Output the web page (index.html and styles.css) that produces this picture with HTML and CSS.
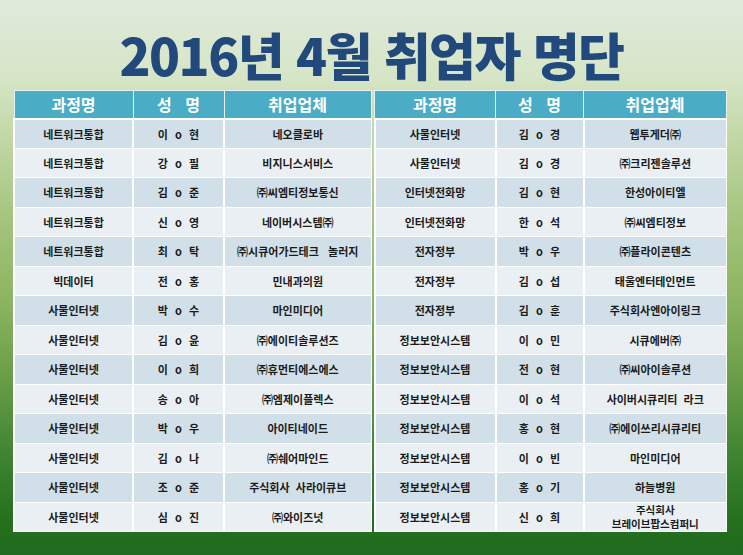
FILE: index.html
```html
<!DOCTYPE html>
<html lang="ko">
<head>
<meta charset="utf-8">
<link rel="stylesheet" href="styles.css">
</head>
<body>
<div class="page">
  <h1 class="title">2016년 4월 취업자 명단</h1>
  <div class="tables">
    <table class="list list-left">
      <colgroup><col class="c1"><col class="c2"><col class="c3"></colgroup>
      <thead><tr><th>과정명</th><th>성&nbsp;&nbsp;&nbsp;명</th><th>취업업체</th></tr></thead>
      <tbody>
        <tr><td>네트워크통합</td><td class="nm">이 o 현</td><td>네오클로바</td></tr>
        <tr><td>네트워크통합</td><td class="nm">강 o 필</td><td>비지니스서비스</td></tr>
        <tr><td>네트워크통합</td><td class="nm">김 o 준</td><td>㈜씨엠티정보통신</td></tr>
        <tr><td>네트워크통합</td><td class="nm">신 o 영</td><td>네이버시스템㈜</td></tr>
        <tr><td>네트워크통합</td><td class="nm">최 o 탁</td><td>㈜시큐어가드테크&nbsp;&nbsp;&nbsp;놀러지</td></tr>
        <tr><td>빅데이터</td><td class="nm">전 o 홍</td><td>민내과의원</td></tr>
        <tr><td>사물인터넷</td><td class="nm">박 o 수</td><td>마인미디어</td></tr>
        <tr><td>사물인터넷</td><td class="nm">김 o 윤</td><td>㈜에이티솔루션즈</td></tr>
        <tr><td>사물인터넷</td><td class="nm">이 o 희</td><td>㈜휴먼티에스에스</td></tr>
        <tr><td>사물인터넷</td><td class="nm">송 o 아</td><td>㈜엠제이플렉스</td></tr>
        <tr><td>사물인터넷</td><td class="nm">박 o 우</td><td>아이티네이드</td></tr>
        <tr><td>사물인터넷</td><td class="nm">김 o 나</td><td>㈜쉐어마인드</td></tr>
        <tr><td>사물인터넷</td><td class="nm">조 o 준</td><td>주식회사&nbsp;&nbsp;사라이큐브</td></tr>
        <tr><td>사물인터넷</td><td class="nm">심 o 진</td><td>㈜와이즈넛</td></tr>
      </tbody>
    </table>
    <table class="list list-right">
      <colgroup><col class="c1"><col class="c2"><col class="c3"></colgroup>
      <thead><tr><th>과정명</th><th>성&nbsp;&nbsp;&nbsp;명</th><th>취업업체</th></tr></thead>
      <tbody>
        <tr><td>사물인터넷</td><td class="nm">김 o 경</td><td>웹투게더㈜</td></tr>
        <tr><td>사물인터넷</td><td class="nm">김 o 경</td><td>㈜크리젠솔루션</td></tr>
        <tr><td>인터넷전화망</td><td class="nm">김 o 현</td><td>한성아이티엘</td></tr>
        <tr><td>인터넷전화망</td><td class="nm">한 o 석</td><td>㈜씨엠티정보</td></tr>
        <tr><td>전자정부</td><td class="nm">박 o 우</td><td>㈜플라이콘텐츠</td></tr>
        <tr><td>전자정부</td><td class="nm">김 o 섭</td><td>태울엔터테인먼트</td></tr>
        <tr><td>전자정부</td><td class="nm">김 o 훈</td><td>주식회사엔아이링크</td></tr>
        <tr><td>정보보안시스템</td><td class="nm">이 o 민</td><td>시큐에버㈜</td></tr>
        <tr><td>정보보안시스템</td><td class="nm">전 o 현</td><td>㈜씨아이솔루션</td></tr>
        <tr><td>정보보안시스템</td><td class="nm">이 o 석</td><td>사이버시큐리티&nbsp;&nbsp;라크</td></tr>
        <tr><td>정보보안시스템</td><td class="nm">홍 o 현</td><td>㈜에이쓰리시큐리티</td></tr>
        <tr><td>정보보안시스템</td><td class="nm">이 o 빈</td><td>마인미디어</td></tr>
        <tr><td>정보보안시스템</td><td class="nm">홍 o 기</td><td>하늘병원</td></tr>
        <tr><td>정보보안시스템</td><td class="nm">신 o 희</td><td class="two">주식회사<br>브레이브팝스컴퍼니</td></tr>
      </tbody>
    </table>
  </div>
</div>
</body>
</html>
```

FILE: styles.css
```css
html, body {
  margin: 0;
  padding: 0;
}
body {
  width: 743px;
  height: 555px;
  overflow: hidden;
  font-family: "Noto Sans CJK KR", "Noto Sans", sans-serif;
}
.page {
  width: 743px;
  height: 555px;
  box-sizing: border-box;
  display: flex;
  flex-direction: column;
  background:
    linear-gradient(to bottom, #e0eadb 0%, #d6e5c6 14%, #c3d8a8 24%, #a3c47b 40%, #8ab35f 55%, #6a9d48 68%, #3f8431 82%, #26721f 93%, #1f6a1d 100%);
}
.title {
  margin: 0;
  height: 90px;
  box-sizing: border-box;
  padding-top: 29px;
  text-align: center;
  font-size: 51px;
  line-height: 50px;
  font-weight: 900;
  letter-spacing: -1.5px;
  color: #21497c;
}
.tables {
  display: flex;
  gap: 2px;
  padding-left: 13px;
}
.list {
  border-collapse: collapse;
  table-layout: fixed;
  font-size: 11px;
  color: #1b1b1b;
}
.list-left { width: 357px; }
.list-right { width: 352px; }
.list-left .c1 { width: 119px; }
.list-left .c2 { width: 91px; }
.list-left .c3 { width: 147px; }
.list-right .c1 { width: 121px; }
.list-right .c2 { width: 88px; }
.list-right .c3 { width: 143px; }
.list thead tr { height: 28px; }
.list th {
  padding: 0;
  line-height: 20px;
  background: #4bacc6;
  color: #ffffff;
  font-size: 16px;
  font-weight: 700;
  border: 1px solid #e8f1f4;
  border-bottom: 2px solid #ffffff;
}
.list tbody tr { height: 29.5px; }
.list td {
  padding: 0;
  line-height: 14px;
  text-align: center;
  font-weight: 700;
  border: 1px solid #ffffff;
  border-left-width: 2px;
  white-space: nowrap;
}
.list tbody tr:nth-child(odd) td { background: #d1e0e8; }
.list tbody tr:nth-child(even) td { background: #e9eff3; }
.list td.nm { word-spacing: 4px; }
.list td.two { font-size: 10.5px; line-height: 14px; }
```
